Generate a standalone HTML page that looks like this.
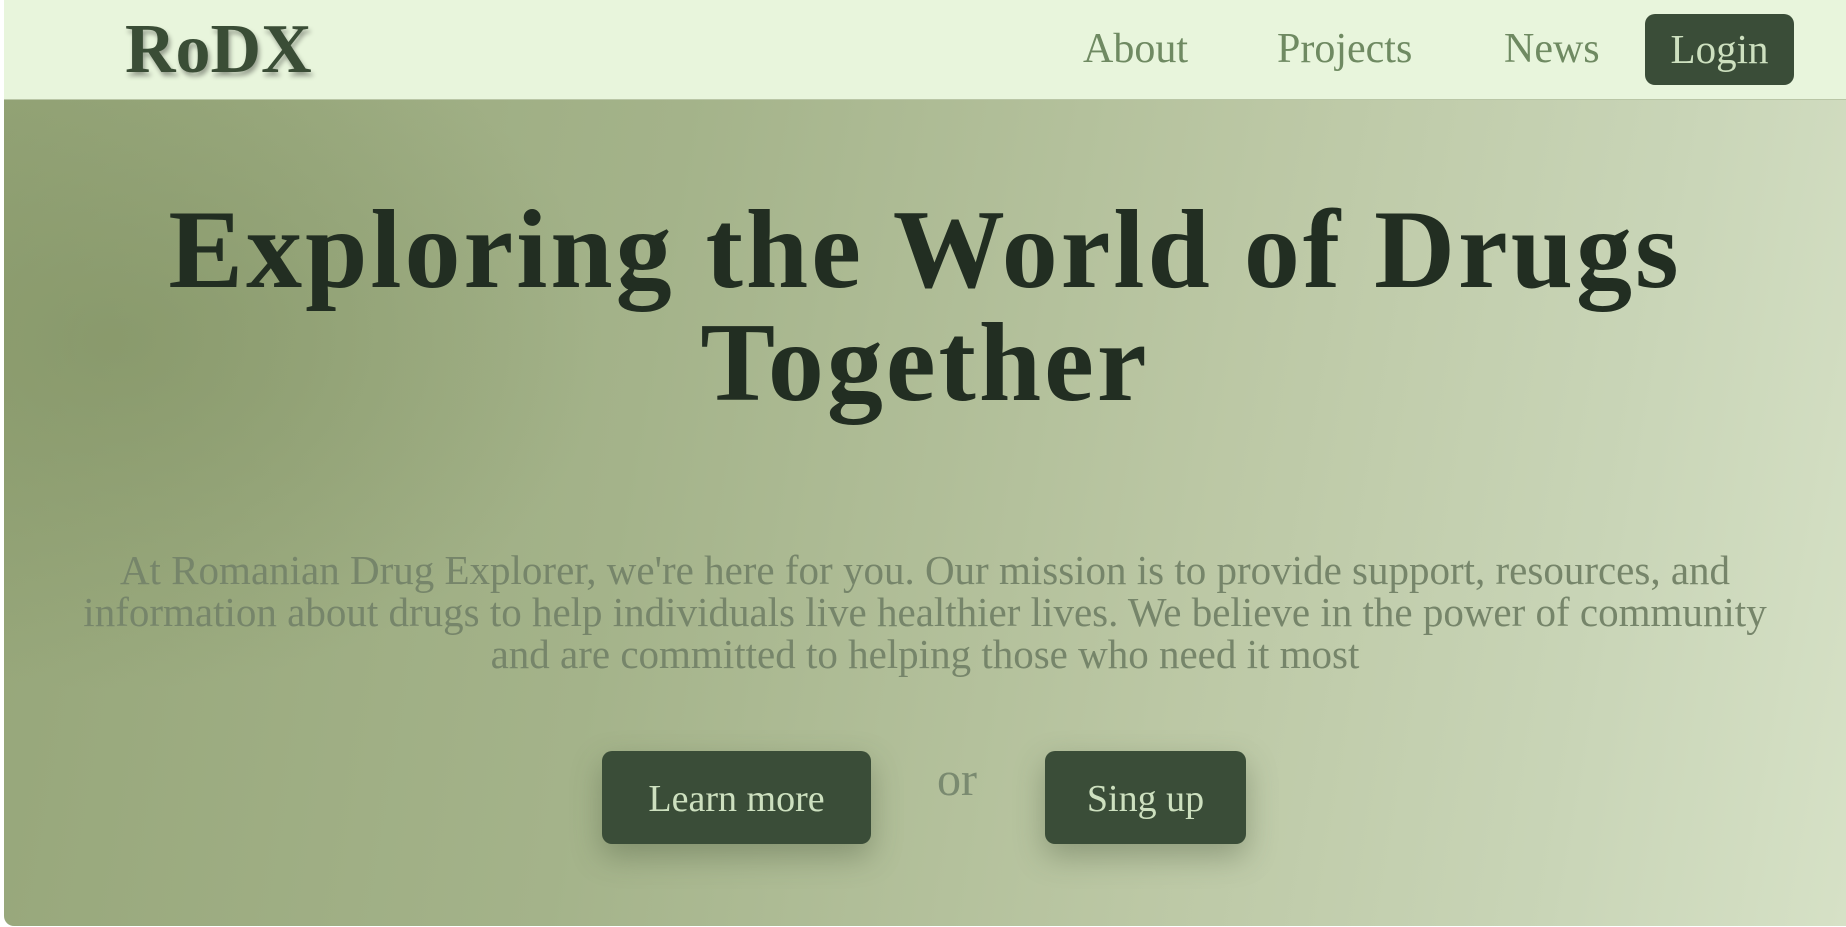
<!DOCTYPE html>
<html><head><meta charset="utf-8"><style>
html,body{margin:0;padding:0;width:1846px;height:927px;overflow:hidden;background:#fff;font-family:"Liberation Serif",serif;}
.wrap{position:absolute;left:4px;top:0;width:1842px;height:926px;border-bottom-left-radius:10px;overflow:hidden;
background:
radial-gradient(ellipse 700px 500px at 110px 340px, rgba(125,142,95,0.55), rgba(125,142,95,0) 70%),
linear-gradient(100deg,#95a578 0%,#a4b38a 35%,#bcc8a5 65%,#c9d5b7 85%,#d6e1c6 100%);}
.nav{position:absolute;left:0;top:0;width:100%;height:99px;background:#e8f5dc;border-bottom:1px solid #b9c6a6;}
.logo{position:absolute;left:121px;top:10px;font-size:70px;font-weight:bold;color:#3a4d36;text-shadow:2px 4px 5px rgba(0,0,0,0.35);}
.link{position:absolute;top:25px;font-size:42px;color:#6f8a62;}
.login{position:absolute;left:1641px;top:14px;width:149px;height:71px;background:#3a4d38;border-radius:10px;color:#cde0bf;font-size:41px;text-align:center;line-height:70px;}
h1{position:absolute;left:0;top:194px;width:100%;margin:0;text-align:center;font-size:112px;line-height:113px;letter-spacing:3px;color:#222e22;font-weight:bold;}
p{position:absolute;left:30px;width:1782px;top:549px;margin:0;text-align:center;font-size:41px;line-height:42px;color:#76856a;}
.btn{position:absolute;top:751px;height:93px;background:#3a4d38;border-radius:10px;color:#cde0bf;font-size:38px;text-align:center;line-height:96px;box-shadow:0 12px 30px rgba(60,75,50,0.35);}
.or{position:absolute;left:933px;top:752px;font-size:48px;color:#7a8a70;}
</style></head><body>
<div class="wrap">
<div class="nav">
<div class="logo">RoDX</div>
<div class="link" style="left:1079px">About</div>
<div class="link" style="left:1273px">Projects</div>
<div class="link" style="left:1500px">News</div>
<div class="login">Login</div>
</div>
<h1>Exploring the World of Drugs<br>Together</h1>
<p>At Romanian Drug Explorer, we're here for you. Our mission is to provide support, resources, and<br>information about drugs to help individuals live healthier lives. We believe in the power of community<br>and are committed to helping those who need it most</p>
<div class="btn" style="left:598px;width:269px">Learn more</div>
<div class="or">or</div>
<div class="btn" style="left:1041px;width:201px">Sing up</div>
</div>
</body></html>
